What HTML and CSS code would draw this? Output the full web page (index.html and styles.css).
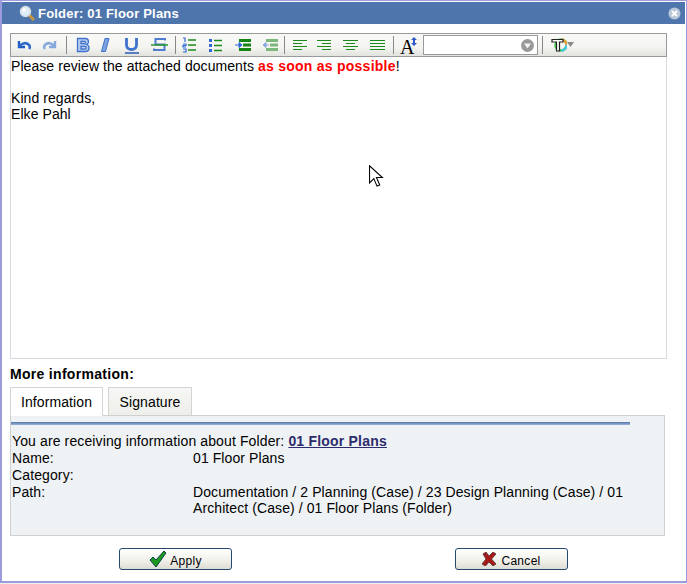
FILE: index.html
```html
<!DOCTYPE html>
<html lang="en">
<head>
<meta charset="utf-8">
<title>Folder: 01 Floor Plans</title>
<link rel="stylesheet" href="styles.css">
</head>
<body>
<div class="dialog">
  <header class="titlebar">
    <svg class="title-icon" width="16" height="16" viewBox="0 0 16 16"><line x1="9.500" y1="9.500" x2="15" y2="15" stroke="#c8963c" stroke-width="3"/><circle cx="6.500" cy="6.500" r="5" fill="#dfeefa" stroke="#d5dde5" stroke-width="1.500"/><circle cx="5" cy="5" r="1.800" fill="#fff"/></svg>
    <span class="title-text">Folder: 01 Floor Plans</span>
    <svg class="close" width="13" height="13" viewBox="0 0 13 13"><circle cx="6.500" cy="6.500" r="6" fill="#b9c6d8"/><path d="M4 4l5 5M9 4l-5 5" stroke="#fff" stroke-width="1.800"/></svg>
  </header>
  <main class="content">
    <div class="toolbar">
      <svg class="ic ml5" width="16" height="16" viewBox="0 0 16 16"><path d="M3 4v6h6" fill="none" stroke="#1f5cc8" stroke-width="2.400"/><path d="M3.500 9.500C6 5.500 11 5 13.500 8.500c.6 1 .5 2.200-.3 3.500" fill="none" stroke="#2f68c8" stroke-width="2.600"/></svg>
      <svg class="ic ml10" width="16" height="16" viewBox="0 0 16 16"><path d="M13 4v6H7" fill="none" stroke="#86a8dc" stroke-width="2.400"/><path d="M12.500 9.500C10 5.500 5 5 2.500 8.500c-.6 1-.5 2.200.3 3.500" fill="none" stroke="#86a8dc" stroke-width="2.600"/></svg>
      <i class="sep ml8"></i>
      <svg class="ic ml8" width="18" height="18" viewBox="0 0 18 18"><path d="M2.500 2.500h8c3.500 0 4 5 1 6 3.500 1 3.500 7-1 7h-8zM6 5.500v2.200h3.500c1.300 0 1.300-2.200 0-2.200zM6 10.500v2.500h4c1.500 0 1.500-2.500 0-2.500z" fill="#b8ccf0" fill-rule="evenodd" stroke="#3f72cc" stroke-width="1.300"/></svg>
      <svg class="ic ml4" width="16" height="18" viewBox="0 0 16 18"><path d="M8 2.500h4L8.500 15.500h-4z" fill="#7ea2dc" stroke="#3f72cc"/></svg>
      <svg class="ic ml10" width="18" height="18" viewBox="0 0 18 18"><path d="M3.500 2v7c0 6 10 6 10 0V2" fill="none" stroke="#3f72cc" stroke-width="2.800"/><path d="M2 17h14" stroke="#2a5ab8" stroke-width="1.500"/></svg>
      <svg class="ic ml10" width="18" height="18" viewBox="0 0 18 18"><path d="M14 4.500V3H4.500v5.500h9V14H3v-1.500" fill="none" stroke="#4f7cd0" stroke-width="2"/><path d="M0 9h17" stroke="#2a9a2a" stroke-width="1.500"/></svg>
      <i class="sep ml6"></i>
      <svg class="ic ml6" width="16" height="16" viewBox="0 0 16 16"><path d="M1 1h2v4M1 7h3v1.500H1V10h3M1 12h3v3H1" fill="none" stroke="#2f68d8" stroke-width="1.200"/><path d="M6 3h8M6 8h8M6 13h8" stroke="#1a8a1a" stroke-width="1.400"/></svg>
      <svg class="ic ml10" width="16" height="16" viewBox="0 0 16 16"><path d="M1 2h3v3H1zM1 7h3v3H1zM1 12h3v3H1z" fill="#2f68d8"/><path d="M6 3.500h8M6 8.500h8M6 13.500h8" stroke="#1a8a1a" stroke-width="1.400"/></svg>
      <svg class="ic ml11" width="16" height="16" viewBox="0 0 16 16"><path d="M4 2h12v3H4zM8 6.500h8v3H8zM4 11h12v3H4z" fill="#148414"/><path d="M0 8h5M4 5.500l3 2.500-3 2.500z" stroke="#2f68d8" fill="#2f68d8"/></svg>
      <svg class="ic ml11" width="16" height="16" viewBox="0 0 16 16"><path d="M4 2h12v3H4zM8 6.500h8v3H8zM4 11h12v3H4z" fill="#7cb87c"/><path d="M2 8h5M4 5.500l-3 2.500 3 2.500z" stroke="#86a8dc" fill="#86a8dc"/></svg>
      <i class="sep ml6"></i>
      <svg class="ic ml7" width="15" height="12" viewBox="0 0 15 12"><path d="M1 1.500h14M1 4.500h9M1 7.500h14M1 10.500h9" stroke="#1a8a1a"/></svg>
      <svg class="ic ml10" width="15" height="12" viewBox="0 0 15 12"><path d="M0 1.500h14M5 4.500h9M0 7.500h14M5 10.500h9" stroke="#1a8a1a"/></svg>
      <svg class="ic ml11" width="15" height="12" viewBox="0 0 15 12"><path d="M0 1.500h15M3 4.500h9M0 7.500h15M3 10.500h9" stroke="#1a8a1a"/></svg>
      <svg class="ic ml12" width="15" height="12" viewBox="0 0 15 12"><path d="M0 1.500h15M0 4.500h15M0 7.500h15M0 10.500h15" stroke="#1a8a1a"/></svg>
      <i class="sep ml8"></i>
      <span class="font-a">A</span>
      <svg class="size-arrows" width="6" height="9" viewBox="0 0 6 9"><path d="M3 0l3 3H0zM3 9l3-3H0z" fill="#2f58c8"/><path d="M2 3h2v3H2z" fill="#2f58c8"/></svg>
      <div class="select"><svg width="13" height="13" viewBox="0 0 13 13"><circle cx="6.500" cy="6.500" r="6.500" fill="#999"/><path d="M3 4.500h7l-3.500 5z" fill="#f4f4f4"/></svg></div>
      <i class="sep ml4"></i>
      <svg class="ic ml8" width="16" height="16" viewBox="0 0 16 16"><circle cx="10" cy="8" r="5.500" fill="none" stroke="#4c4" stroke-width="2.500"/><path d="M10 2.500A5.500 5.500 0 0 1 15.500 8" fill="none" stroke="#e6a040" stroke-width="2.500"/><path d="M10 13.500A5.500 5.500 0 0 0 15.500 8" fill="none" stroke="#48c8e0" stroke-width="2.500"/><path d="M1 2.500h11v2.500H8.500v9h-3V5H1z" fill="#fff" stroke="#222" stroke-width="1.200"/></svg>
      <svg class="drop" width="7" height="5" viewBox="0 0 7 5"><path d="M0 0h7L3.500 5z" fill="#888"/></svg>
    </div>
    <div class="editor">
      <p>Please review the attached documents <strong class="urgent">as soon as possible</strong>!</p>
      <p class="gap">Kind regards,<br>Elke Pahl</p>
    </div>
    <h2 class="more">More information:</h2>
    <div class="tabs">
      <span class="tab tab-active">Information</span>
      <span class="tab tab-plain">Signature</span>
    </div>
    <section class="panel">
      <div class="rule"></div>
      <p class="intro">You are receiving information about Folder: <a class="link" href="#">01 Floor Plans</a></p>
      <dl class="details">
        <dt>Name:</dt><dd>01 Floor Plans</dd>
        <dt>Category:</dt><dd></dd>
        <dt>Path:</dt><dd>Documentation / 2 Planning (Case) / 23 Design Planning (Case) / 01 Architect (Case) / 01 Floor Plans (Folder)</dd>
      </dl>
    </section>
    <div class="actions">
      <button class="btn" type="button"><svg width="18" height="16" viewBox="0 0 18 16"><path d="M1 9l3-3 3 3 8-9 2 2L7 16z" fill="#1d9a1d" stroke="#0c3f4f"/></svg><span class="btn-label">Apply</span></button>
      <button class="btn" type="button"><svg class="x-ic" width="14" height="14" viewBox="0 0 14 14"><path d="M1 2l3-2 3 4 4-4 3 2-4.500 5L14 12l-3 2-4-4-3.500 4L0 12l4-5z" fill="#a81818" stroke="#4a3030" stroke-width=".8"/></svg><span class="btn-label">Cancel</span></button>
    </div>
  </main>
  <svg class="pointer" width="15" height="24" viewBox="0 0 14 22"><path d="M.5.5v16l4-4 3 7 2.500-1-3-7h5.500z" fill="#fff" stroke="#000"/></svg>
</div>
</body>
</html>
```
FILE: styles.css
```css
* { box-sizing: border-box; }
html, body { margin: 0; padding: 0; }
body {
  width: 687px;
  height: 584px;
  overflow: hidden;
  background: #f0f0f0;
  font-family: "Liberation Sans", Arial, sans-serif;
  font-size: 14px;
  color: #000;
}
.dialog {
  position: relative;
  width: 687px;
  height: 583px;
  border: solid #9c9cdc;
  border-width: 1px 1px 2px 2px;
  background: #fff;
  display: flex;
  flex-direction: column;
}
.titlebar {
  height: 22px;
  margin: 1px 1px 0 0;
  background: #4f76ac;
  color: #fff;
  display: flex;
  align-items: center;
  padding: 0 0 0 17px;
  gap: 3px;
  flex: none;
}
.title-text {
  font-weight: 700;
  font-size: 13px;
  letter-spacing: .2px;
}
.close { margin-left: auto; margin-right: 4px; }
.content {
  flex: 1;
  padding: 9px 0 0 8px;
  display: flex;
  flex-direction: column;
  min-height: 0;
  width: 665px;
}
.toolbar {
  height: 24px;
  width: 657px;
  flex: none;
  border: 1px solid #999;
  background: linear-gradient(#f8f8f6, #f4f4f1 60%, #e2e2de);
  display: flex;
  align-items: center;
}
.ic { flex: none; display: block; }
.ml4 { margin-left: 4px; }
.ml5 { margin-left: 5px; }
.ml6 { margin-left: 6px; }
.ml7 { margin-left: 7px; }
.ml8 { margin-left: 8px; }
.ml10 { margin-left: 10px; }
.ml11 { margin-left: 11px; }
.ml12 { margin-left: 12px; }
.sep {
  width: 1px;
  height: 18px;
  background: #888;
  flex: none;
}
.font-a {
  font-family: "Liberation Serif", serif;
  font-size: 20px;
  line-height: 20px;
  margin: 3px 0 0 6px;
}
.size-arrows { margin: -8px 0 0 -3px; flex: none; }
.select {
  width: 115px;
  height: 20px;
  margin-left: 6px;
  border: 1px solid #999;
  background: #fff;
  display: flex;
  align-items: center;
  justify-content: flex-end;
  padding-right: 3px;
}
.drop { margin-top: -2px; }
.editor {
  height: 302px;
  width: 657px;
  flex: none;
  border: 1px solid #d8d8e0;
  border-top: 0;
  padding: 1px 0 0;
  line-height: 16px;
  letter-spacing: .07px;
}
.editor p { margin: 0; }
.editor .gap { margin-top: 16px; }
.urgent { color: #f00; letter-spacing: .25px; }
.more {
  margin: 7px 0 5px;
  font-size: 14px;
  line-height: 16px;
  font-weight: 700;
  letter-spacing: .3px;
}
.tabs {
  display: flex;
  gap: 5px;
  height: 29px;
  flex: none;
}
.tab {
  height: 29px;
  border: 1px solid #d4d4d4;
  line-height: 29px;
  text-align: center;
  background: linear-gradient(#f6f6f4, #eeeeea);
  letter-spacing: .1px;
}
.tab-plain { width: 84px; }
.tab-active {
  width: 93px;
  background: #fff;
  border-bottom-color: #fff;
  position: relative;
  z-index: 1;
}
.panel {
  width: 655px;
  height: 121px;
  flex: none;
  margin-top: -1px;
  border: 1px solid #d0d0d0;
  background: #eff2f4;
  padding: 6px 0 0 1px;
  line-height: 17px;
  letter-spacing: .12px;
}
.rule {
  width: 619px;
  height: 3px;
  background: linear-gradient(#4f76ac, #9db4d4);
  margin-left: -1px;
  margin-bottom: 8px;
}
.intro { margin: 0; }
.link { color: #2c2c6c; font-weight: 700; letter-spacing: .2px; }
.details {
  margin: 0;
  display: grid;
  grid-template-columns: 181px 440px;
  grid-auto-rows: minmax(17px, auto);
}
.details dt, .details dd { margin: 0; }
.details dd { line-height: 16px; letter-spacing: .09px; }
.actions {
  display: flex;
  justify-content: space-between;
  padding: 12px 99px 0 109px;
  width: 657px;
}
.btn {
  width: 113px;
  height: 22px;
  border: 1px solid #27486e;
  border-radius: 3px;
  background: linear-gradient(#fff, #f0f0ea 60%, #dcdcd4);
  display: flex;
  align-items: center;
  justify-content: center;
  gap: 3px;
  font-family: inherit;
  font-size: 12px;
  letter-spacing: .3px;
  color: #000;
  padding: 0;
}
.btn-label { margin-top: 3px; }
.x-ic { margin-right: 2px; }
.pointer { position: absolute; left: 367px; top: 164px; }
```
